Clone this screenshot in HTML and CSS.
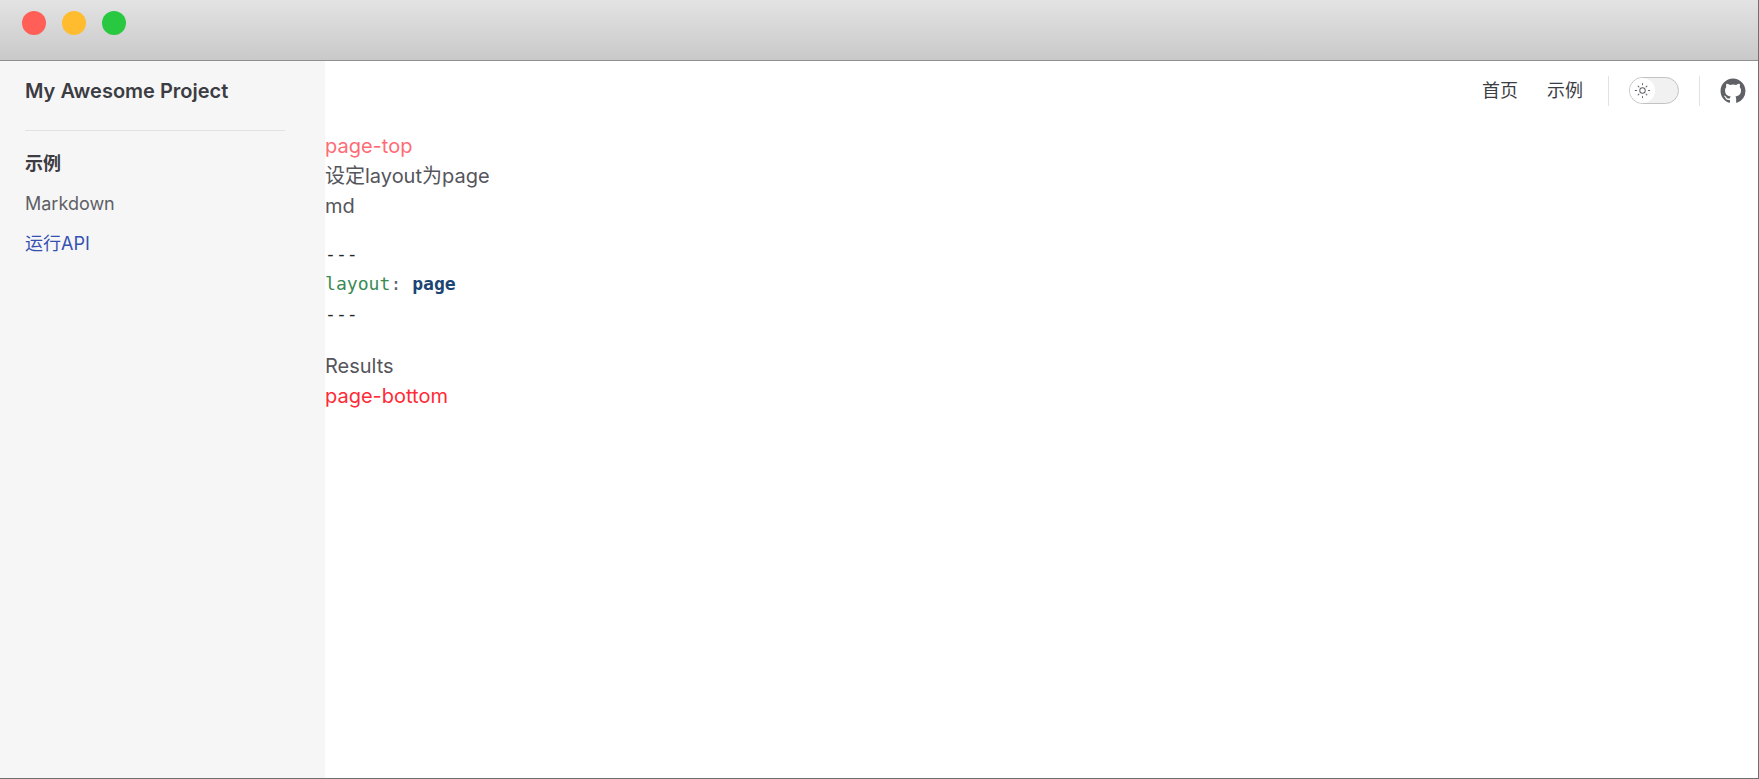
FILE: index.html
```html
<!DOCTYPE html>
<html lang="en">

<head>
    <meta charset="UTF-8">
    <title>My Awesome Project</title>
    <link rel="stylesheet" href="styles.css">
</head>

<body>
    <div class="window">
        <header class="titlebar">
            <span class="dot dot_red"></span>
            <span class="dot dot_yellow"></span>
            <span class="dot dot_green"></span>
        </header>
        <div class="main">
            <aside class="sidebar">
                <div class="site_title">My Awesome Project</div>
                <div class="side_rule"></div>
                <div class="side_group">示例</div>
                <a class="side_link">Markdown</a>
                <a class="side_link side_active">运行API</a>
            </aside>
            <div class="page">
                <nav class="nav">
                    <a class="nav_link">首页</a>
                    <a class="nav_link">示例</a>
                    <span class="nav_sep"></span>
                    <span class="switch">
                        <span class="knob">
                            <svg viewBox="0 0 24 24" width="17" height="17" fill="#5c5c62">
                                <path d="M12 7.500a4.500 4.500 0 1 0 0 9 4.500 4.500 0 0 0 0-9zm0 1.300a3.200 3.200 0 1 1 0 6.400 3.200 3.200 0 0 1 0-6.400z"/>
                                <rect x="11.300" y="1" width="1.400" height="3.500" rx=".7"/>
                                <rect x="11.300" y="19.500" width="1.400" height="3.500" rx=".7"/>
                                <rect x="1" y="11.300" width="3.500" height="1.400" rx=".7"/>
                                <rect x="19.500" y="11.300" width="3.500" height="1.400" rx=".7"/>
                                <rect x="11.300" y="2.500" width="1.400" height="3.200" rx=".7" transform="rotate(45 12 12)"/>
                                <rect x="11.300" y="18.300" width="1.400" height="3.200" rx=".7" transform="rotate(45 12 12)"/>
                                <rect x="11.300" y="2.500" width="1.400" height="3.200" rx=".7" transform="rotate(-45 12 12)"/>
                                <rect x="11.300" y="18.300" width="1.400" height="3.200" rx=".7" transform="rotate(-45 12 12)"/>
                            </svg>
                        </span>
                    </span>
                    <span class="nav_sep nav_sep_last"></span>
                    <svg class="github" viewBox="0 0 24 24" width="26" height="26" fill="#606067">
                        <path d="M12 .5C5.650.5.500 5.650.500 12c0 5.080 3.290 9.390 7.860 10.910.580.110.790-.250.790-.550v-2.140c-3.200.700-3.870-1.360-3.870-1.360-.520-1.330-1.280-1.680-1.280-1.680-1.040-.710.080-.700.080-.700 1.150.080 1.760 1.190 1.760 1.190 1.030 1.760 2.690 1.250 3.340.960.100-.750.400-1.250.730-1.540-2.550-.290-5.240-1.280-5.240-5.690 0-1.260.450-2.280 1.190-3.090-.120-.290-.510-1.460.110-3.050 0 0 .970-.310 3.170 1.180a11 11 0 0 1 5.770 0c2.200-1.490 3.170-1.180 3.170-1.180.630 1.590.230 2.760.110 3.050.740.810 1.190 1.830 1.190 3.090 0 4.420-2.690 5.390-5.260 5.680.410.360.780 1.060.780 2.130v3.160c0 .310.210.670.800.550A11.500 11.500 0 0 0 23.500 12C23.500 5.650 18.350.500 12 .500z"/>
                    </svg>
                </nav>
                <div class="content">
                    <div class="slot_top">page-top</div>
                    <div>设定layout为page</div>
                    <div>md</div>
                    <pre class="code"><code>---
<span class="c_key">layout</span><span class="c_colon">:</span> <span class="c_val">page</span>
---</code></pre>
                    <div>Results</div>
                    <div class="slot_bottom">page-bottom</div>
                </div>
            </div>
        </div>
    </div>
</body>

</html>
```

FILE: styles.css
```css
* {
    margin: 0;
    padding: 0;
    box-sizing: border-box;
}

body {
    width: 1759px;
    height: 779px;
    overflow: hidden;
    background-color: #fff;
    font-family: Inter, "Noto Sans CJK SC", sans-serif;
    font-size: 20px;
    line-height: 30px;
    color: #55555c;
}

.window {
    width: 100%;
    height: 100%;
    display: flex;
    flex-direction: column;
    border-right: 1px solid #6f6f6f;
    border-bottom: 1px solid #6f6f6f;
}

.titlebar {
    height: 61px;
    flex: none;
    display: flex;
    gap: 16px;
    padding: 11px 0 0 22px;
    background: linear-gradient(#e3e3e3, #c9c9c9);
    border-bottom: 1px solid #8f8f8f;
}

.dot {
    width: 24px;
    height: 24px;
    border-radius: 50%;
}

.dot_red {
    background-color: #ff5f57;
}

.dot_yellow {
    background-color: #febc2e;
}

.dot_green {
    background-color: #28c840;
}

.main {
    flex: 1;
    display: flex;
    min-height: 0;
}

.sidebar {
    width: 325px;
    flex: none;
    background-color: #f6f6f7;
    padding: 0 40px 0 25px;
}

.site_title {
    height: 69px;
    padding-top: 15px;
    font-size: 20px;
    font-weight: 600;
    color: #3c3c43;
}

.side_rule {
    height: 1px;
    background-color: #e2e2e3;
    margin-bottom: 13px;
}

.side_group {
    height: 40px;
    font-size: 18px;
    line-height: 40px;
    font-weight: 700;
    color: #3c3c43;
}

.side_link {
    display: block;
    height: 40px;
    font-size: 18px;
    line-height: 40px;
    color: #5f5f66;
}

.side_active {
    color: #3451b2;
}

.page {
    flex: 1;
    min-width: 0;
}

.nav {
    height: 59px;
    margin-bottom: 10px;
    display: flex;
    align-items: center;
    justify-content: flex-end;
    padding-right: 12px;
    font-size: 18px;
    color: #3c3c43;
}

.nav_link {
    margin-right: 29px;
}

.nav_link + .nav_link {
    margin-right: 25px;
}

.nav_sep {
    width: 1px;
    height: 30px;
    background-color: #e2e2e3;
    margin-right: 20px;
}

.nav_sep_last {
    margin-left: 20px;
    margin-right: 20px;
}

.switch {
    width: 50px;
    height: 27px;
    display: flex;
    align-items: center;
    background-color: #f1f1f1;
    border: 1px solid #c2c2c4;
    border-radius: 14px;
}

.knob {
    width: 25px;
    height: 25px;
    display: flex;
    align-items: center;
    justify-content: center;
    background-color: #fff;
    border-radius: 50%;
}

.content {
    padding-top: 1px;
}

.code {
    margin: 18px 0 22px;
    font-family: "DejaVu Sans Mono", monospace;
    font-size: 18.1px;
    line-height: 30px;
    color: #24292e;
}

.c_key {
    color: #3a8a55;
}

.c_colon {
    color: #5c6670;
}

.c_val {
    color: #1c4573;
    font-weight: 600;
}

.slot_top {
    color: #ff6b75;
}

.slot_bottom {
    color: #ff2a36;
}
```
